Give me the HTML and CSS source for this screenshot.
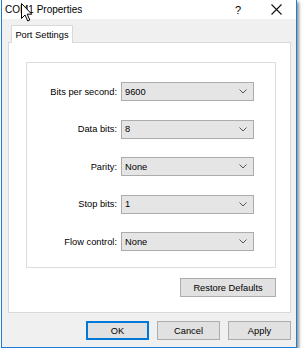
FILE: index.html
```html
<!DOCTYPE html>
<html lang="en">
<head>
  <meta charset="UTF-8">
  <title>COM1 Properties</title>
  <link rel="stylesheet" href="styles.css">
</head>
<body>

  <div class="window">
    <div class="titlebar">
      <span class="title">COM1 Properties</span>
      <span class="help">?</span>
      <svg class="close" width="11" height="11" viewBox="0 0 11 11">
        <path d="M0.5 0.5 L10.5 10.5 M10.5 0.5 L0.5 10.5" stroke="#111" stroke-width="1.1" fill="none"/>
      </svg>
      <svg class="cursor" width="12" height="19" viewBox="0 0 12 19">
        <path d="M0.5 0.5 L0.5 15.5 L4 12 L6.8 18 L8.8 17 L6.2 11.2 L10.8 11.2 Z" fill="#fff" stroke="#000" stroke-width="1"/>
      </svg>
    </div>

    <div class="content">
      <div class="tabs">
        <div class="tab">Port Settings</div>
      </div>

      <div class="panel">
        <div class="group">
          <div class="row">
            <label>Bits per second:</label>
            <div class="select">9600<svg class="chev" width="8" height="5" viewBox="0 0 8 5"><path d="M0.5 0.5 L4 4 L7.5 0.5" stroke="#555" fill="none"/></svg></div>
          </div>
          <div class="row">
            <label>Data bits:</label>
            <div class="select">8<svg class="chev" width="8" height="5" viewBox="0 0 8 5"><path d="M0.5 0.5 L4 4 L7.5 0.5" stroke="#555" fill="none"/></svg></div>
          </div>
          <div class="row">
            <label>Parity:</label>
            <div class="select">None<svg class="chev" width="8" height="5" viewBox="0 0 8 5"><path d="M0.5 0.5 L4 4 L7.5 0.5" stroke="#555" fill="none"/></svg></div>
          </div>
          <div class="row">
            <label>Stop bits:</label>
            <div class="select">1<svg class="chev" width="8" height="5" viewBox="0 0 8 5"><path d="M0.5 0.5 L4 4 L7.5 0.5" stroke="#555" fill="none"/></svg></div>
          </div>
          <div class="row">
            <label>Flow control:</label>
            <div class="select">None<svg class="chev" width="8" height="5" viewBox="0 0 8 5"><path d="M0.5 0.5 L4 4 L7.5 0.5" stroke="#555" fill="none"/></svg></div>
          </div>
        </div>

        <div class="restore">
          <button class="btn wide">Restore Defaults</button>
        </div>
      </div>

      <div class="actions">
        <button class="btn default">OK</button>
        <button class="btn">Cancel</button>
        <button class="btn">Apply</button>
      </div>
    </div>
  </div>

</body>
</html>
```

FILE: styles.css
```css
body {
  margin: 0;
  background-color: #ffffff;
  font-family: "Liberation Sans", Arial, sans-serif;
  font-size: 9.3px;
  color: #000;
}

.window {
  width: 294px;
  margin-left: 1px;
  border: 1px solid #1c7ed6;
  border-top: none;
  box-shadow: 2px 2px 3px rgba(0, 0, 0, 0.45);
  background-color: #f0f0f0;
}

.titlebar {
  position: relative;
  height: 19px;
  background-color: #ffffff;
  display: flex;
  align-items: center;
  padding-left: 3px;
}

.title {
  font-size: 10px;
  flex: 1;
}

.help {
  font-size: 11px;
  margin-right: 30px;
}

.close {
  margin-right: 14px;
}

.cursor {
  position: absolute;
  left: 19px;
  top: 3px;
}

.content {
  padding: 6px 5px 7px 6px;
}

.tabs {
  display: flex;
  padding-left: 3px;
}

.tab {
  background-color: #ffffff;
  border: 1px solid #d9d9d9;
  border-bottom: none;
  height: 17px;
  width: 60px;
  display: flex;
  align-items: center;
  justify-content: center;
  margin-bottom: -1px;
  position: relative;
}

.panel {
  background-color: #ffffff;
  border: 1px solid #d9d9d9;
  padding: 19px 14px 15px 17px;
}

.group {
  border: 1px solid #dcdcdc;
  height: 185px;
  padding-top: 19px;
  box-sizing: content-box;
}

.row {
  display: flex;
  align-items: center;
  height: 19px;
  margin-bottom: 18.5px;
}

.row:last-child {
  margin-bottom: 0;
}

.row label {
  width: 90px;
  text-align: right;
  margin-right: 4px;
}

.select {
  width: 128px;
  height: 17px;
  border: 1px solid #acacac;
  background-color: #e5e5e5;
  display: flex;
  align-items: center;
  padding-left: 3px;
  box-sizing: content-box;
  position: relative;
}

.chev {
  position: absolute;
  right: 6px;
  top: 6px;
}

.restore {
  display: flex;
  justify-content: flex-end;
  margin-top: 10px;
}

.btn {
  font-family: "Liberation Sans", Arial, sans-serif;
  font-size: 9.3px;
  width: 63px;
  height: 19px;
  padding: 0;
  background-color: #e1e1e1;
  border: 1px solid #adadad;
  color: #000;
}

.btn.wide {
  width: 96px;
}

.btn.default {
  border: 2px solid #0078d7;
}

.actions {
  display: flex;
  justify-content: flex-end;
  gap: 8px;
  margin-top: 8px;
}
```
